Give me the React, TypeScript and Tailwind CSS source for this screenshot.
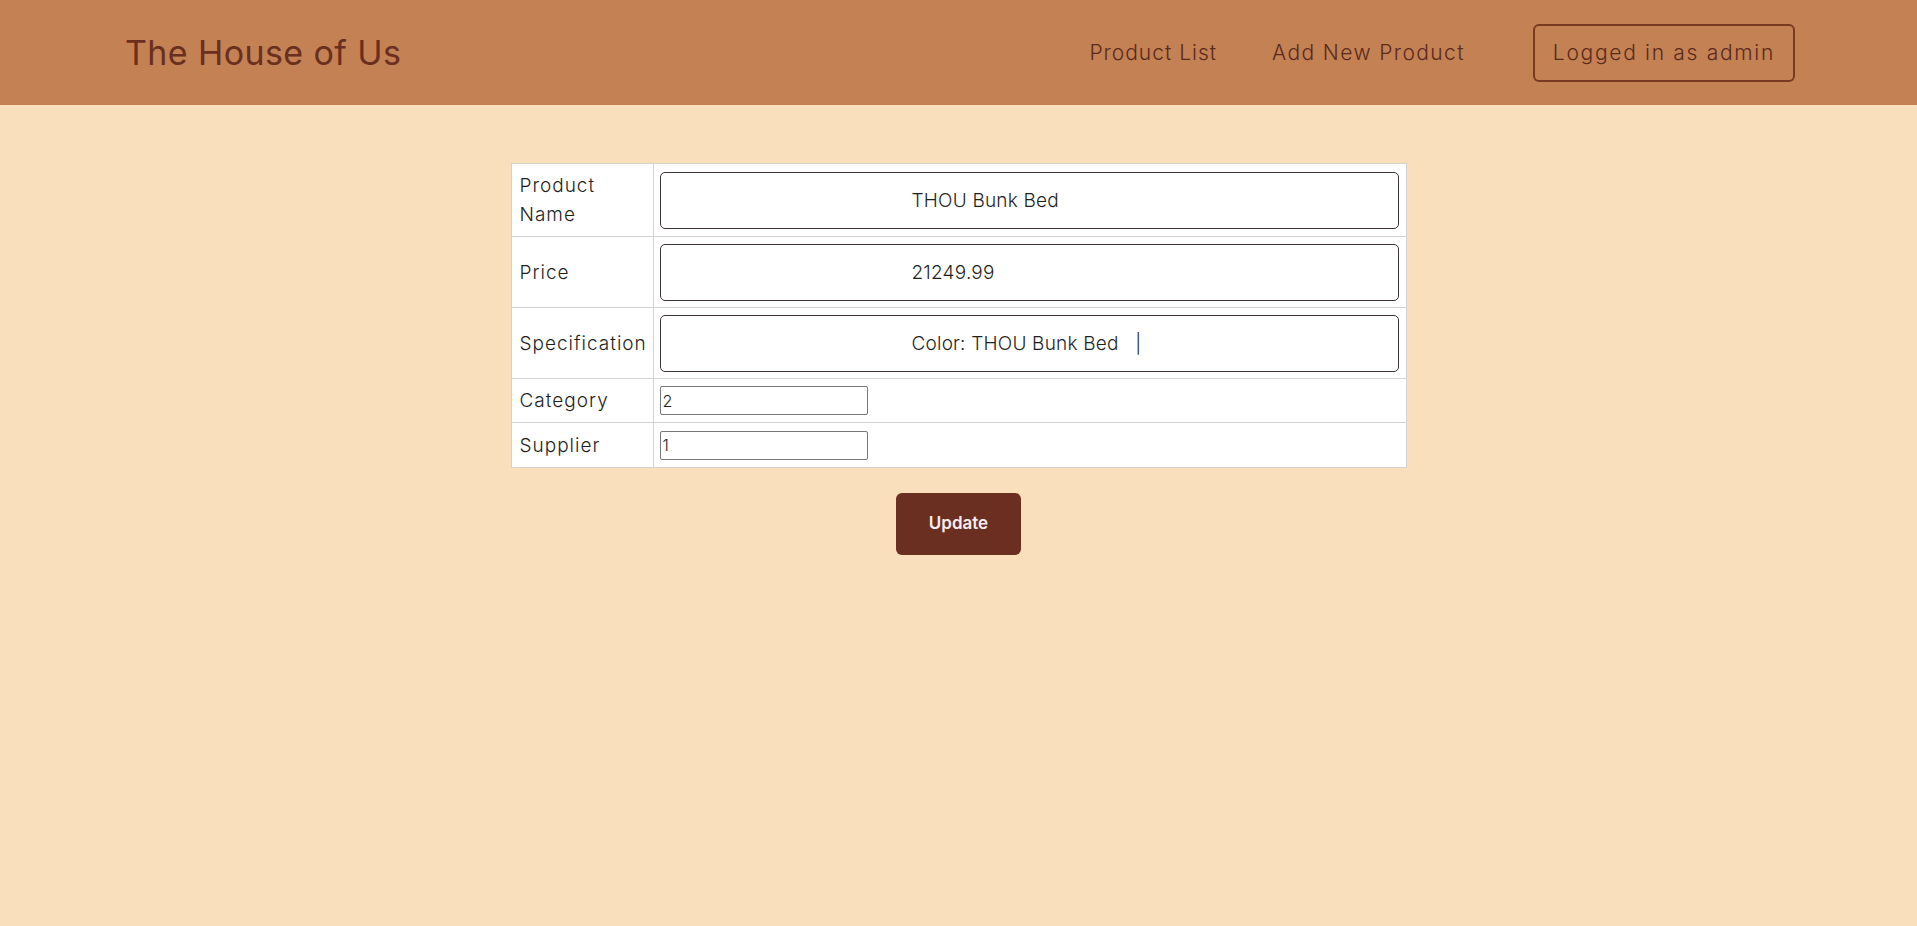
import { useState } from "react";

const font = "font-['Inter','Open_Sans',sans-serif]";

const Header = () => {
  return (
    <header className="h-[105px] bg-[#c38154] flex items-center justify-between pl-[125px] pr-[122px]">
      <h1 className="text-[34px] leading-none text-[#6a2f1e] font-normal tracking-[0.4px]">
        The House of Us
      </h1>
      <nav className="flex items-center">
        <a className="text-[21px] font-light tracking-[1px] text-[#5a2a1c] cursor-pointer">
          Product List
        </a>
        <a className="ml-[55px] text-[21px] font-light tracking-[1.4px] text-[#5a2a1c] cursor-pointer">
          Add New Product
        </a>
        <button className="ml-[68px] h-[58px] px-[18px] border-2 border-[#7a3a20] rounded-[6px] text-[21px] font-light tracking-[1.7px] text-[#5a2a1c]">
          Logged in as admin
        </button>
      </nav>
    </header>
  );
};

const labelCls =
  "border border-[#d2d2d2] pl-[8px] pr-[4px] text-[19px] leading-[29px] font-light tracking-[1px] text-[#1f1f1f]";

const BigRow = ({ label, value, h }: { label: string; value: string; h: string }) => {
  const [val, setVal] = useState(value);
  return (
    <tr>
      <td className={`${labelCls} ${h}`}>{label}</td>
      <td className="border border-[#d2d2d2] px-[6px]">
        <input
          value={val}
          onChange={(e) => setVal(e.target.value)}
          className="w-[739px] h-[57px] pl-[251px] border border-[#3e3434] rounded-[5px] text-[19px] font-light tracking-[0.2px] text-[#1f1f1f] bg-white outline-none"
        />
      </td>
    </tr>
  );
};

const SmallRow = ({ label, value, h }: { label: string; value: string; h: string }) => {
  const [val, setVal] = useState(value);
  return (
    <tr>
      <td className={`${labelCls} ${h}`}>{label}</td>
      <td className="border border-[#d2d2d2] px-[6px]">
        <input
          value={val}
          onChange={(e) => setVal(e.target.value)}
          className="block w-[208px] h-[29px] px-[2px] border border-[#777] rounded-[2px] text-[16px] font-light text-[#222] bg-white outline-none"
        />
      </td>
    </tr>
  );
};

export default function App() {
  return (
    <div className={`min-h-[926px] bg-[#f9dfbc] ${font}`}>
      <Header />
      <main className="flex flex-col items-center pt-[58px]">
        <table className="w-[896px] table-fixed border-collapse border border-[#8c8c8c] bg-white">
          <colgroup>
            <col className="w-[142px]" />
            <col />
          </colgroup>
          <tbody>
            <BigRow label="Product Name" value="THOU Bunk Bed" h="h-[73px]" />
            <BigRow label="Price" value="21249.99" h="h-[71px]" />
            <BigRow label="Specification" value="Color: THOU Bunk Bed   |" h="h-[71px]" />
            <SmallRow label="Category" value="2" h="h-[44px]" />
            <SmallRow label="Supplier" value="1" h="h-[45px]" />
          </tbody>
        </table>
        <button className="mt-[25px] w-[125px] h-[62px] rounded-[6px] bg-[#6a2f20] text-[#f6ecef] text-[17px] font-semibold">
          Update
        </button>
      </main>
    </div>
  );
}
